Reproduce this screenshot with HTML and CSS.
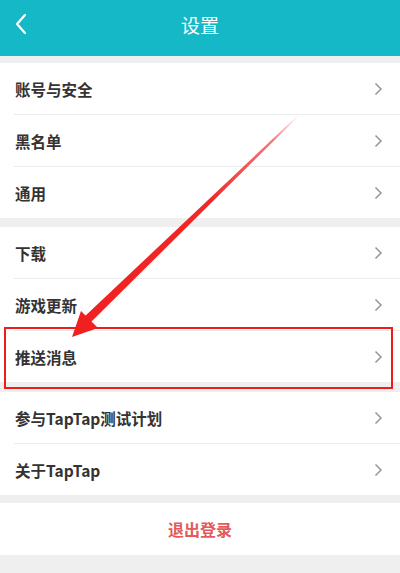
FILE: index.html
```html
<!DOCTYPE html>
<html lang="zh">
<head>
<meta charset="utf-8">
<link rel="stylesheet" href="styles.css">
</head>
<body>
<div class="page">
  <header class="topbar">
    <svg class="back" width="14" height="22" viewBox="0 0 14 22"><path d="M11 2 L3 11 L11 20" fill="none" stroke="#fff" stroke-width="2.2" stroke-linecap="round" stroke-linejoin="round"/></svg>
    <div class="title">设置</div>
  </header>

  <section class="group g1">
    <div class="row"><span>账号与安全</span><svg class="chev" width="9" height="14" viewBox="0 0 9 14"><path d="M1.5 1.5 L7 7 L1.5 12.5" fill="none" stroke="#9a9a9a" stroke-width="1.6"/></svg></div>
    <div class="sep"></div>
    <div class="row"><span>黑名单</span><svg class="chev" width="9" height="14" viewBox="0 0 9 14"><path d="M1.5 1.5 L7 7 L1.5 12.5" fill="none" stroke="#9a9a9a" stroke-width="1.6"/></svg></div>
    <div class="sep"></div>
    <div class="row"><span>通用</span><svg class="chev" width="9" height="14" viewBox="0 0 9 14"><path d="M1.5 1.5 L7 7 L1.5 12.5" fill="none" stroke="#9a9a9a" stroke-width="1.6"/></svg></div>
  </section>

  <section class="group g2">
    <div class="row"><span>下载</span><svg class="chev" width="9" height="14" viewBox="0 0 9 14"><path d="M1.5 1.5 L7 7 L1.5 12.5" fill="none" stroke="#9a9a9a" stroke-width="1.6"/></svg></div>
    <div class="sep"></div>
    <div class="row"><span>游戏更新</span><svg class="chev" width="9" height="14" viewBox="0 0 9 14"><path d="M1.5 1.5 L7 7 L1.5 12.5" fill="none" stroke="#9a9a9a" stroke-width="1.6"/></svg></div>
    <div class="sep"></div>
    <div class="row"><span>推送消息</span><svg class="chev" width="9" height="14" viewBox="0 0 9 14"><path d="M1.5 1.5 L7 7 L1.5 12.5" fill="none" stroke="#9a9a9a" stroke-width="1.6"/></svg></div>
  </section>

  <section class="group g3">
    <div class="row"><span>参与TapTap测试计划</span><svg class="chev" width="9" height="14" viewBox="0 0 9 14"><path d="M1.5 1.5 L7 7 L1.5 12.5" fill="none" stroke="#9a9a9a" stroke-width="1.6"/></svg></div>
    <div class="sep"></div>
    <div class="row"><span>关于TapTap</span><svg class="chev" width="9" height="14" viewBox="0 0 9 14"><path d="M1.5 1.5 L7 7 L1.5 12.5" fill="none" stroke="#9a9a9a" stroke-width="1.6"/></svg></div>
  </section>

  <section class="group g4">
    <div class="logout">退出登录</div>
  </section>

  <div class="highlight"></div>
  <svg class="arrow" width="400" height="573" viewBox="0 0 400 573">
    <defs>
      <linearGradient id="fade" x1="298" y1="115" x2="80" y2="330" gradientUnits="userSpaceOnUse">
        <stop offset="0" stop-color="#f23a3a" stop-opacity="0"/>
        <stop offset="0.12" stop-color="#f23a3a" stop-opacity="0.7"/>
        <stop offset="0.4" stop-color="#f02828" stop-opacity="1"/>
        <stop offset="1" stop-color="#f02020" stop-opacity="1"/>
      </linearGradient>
    </defs>
    <polygon points="298,115 299,116 89,324 83,318" fill="url(#fade)"/>
    <polygon points="72,337 81,311 98,328" fill="#f02020"/>
  </svg>
</div>
</body>
</html>
```
FILE: styles.css
```css
html, body {
  margin: 0;
  padding: 0;
}
body {
  background: #efefef;
  font-family: "Noto Sans CJK SC", "Noto Sans", sans-serif;
}
.page {
  position: relative;
  width: 400px;
  height: 573px;
  overflow: hidden;
  background: #efefef;
}
.topbar {
  height: 56px;
  background: #14b8c6;
  display: flex;
  align-items: center;
  justify-content: center;
  position: relative;
}
.back {
  position: absolute;
  left: 14px;
  top: 13px;
}
.title {
  color: #fff;
  font-size: 19px;
  margin-top: -8px;
}
.group {
  background: #fff;
  display: flex;
  flex-direction: column;
}
.g1 { margin-top: 7px; }
.g2 { margin-top: 9px; }
.g3 { margin-top: 10px; }
.g4 { margin-top: 8px; }
.row {
  height: 51px;
  display: flex;
  align-items: center;
  justify-content: space-between;
  padding: 0 17px 0 15px;
  font-size: 15.5px;
  font-weight: bold;
  color: #333;
}
.sep {
  height: 1px;
  margin-left: 14px;
  background: #ececec;
}
.logout {
  height: 52px;
  display: flex;
  align-items: center;
  justify-content: center;
  color: #e35a5a;
  font-size: 16px;
  font-weight: bold;
}
.highlight {
  position: absolute;
  left: 4px;
  top: 327px;
  width: 385px;
  height: 58px;
  border: 2px solid #f01c1c;
}
.arrow {
  position: absolute;
  left: 0;
  top: 0;
}
```
